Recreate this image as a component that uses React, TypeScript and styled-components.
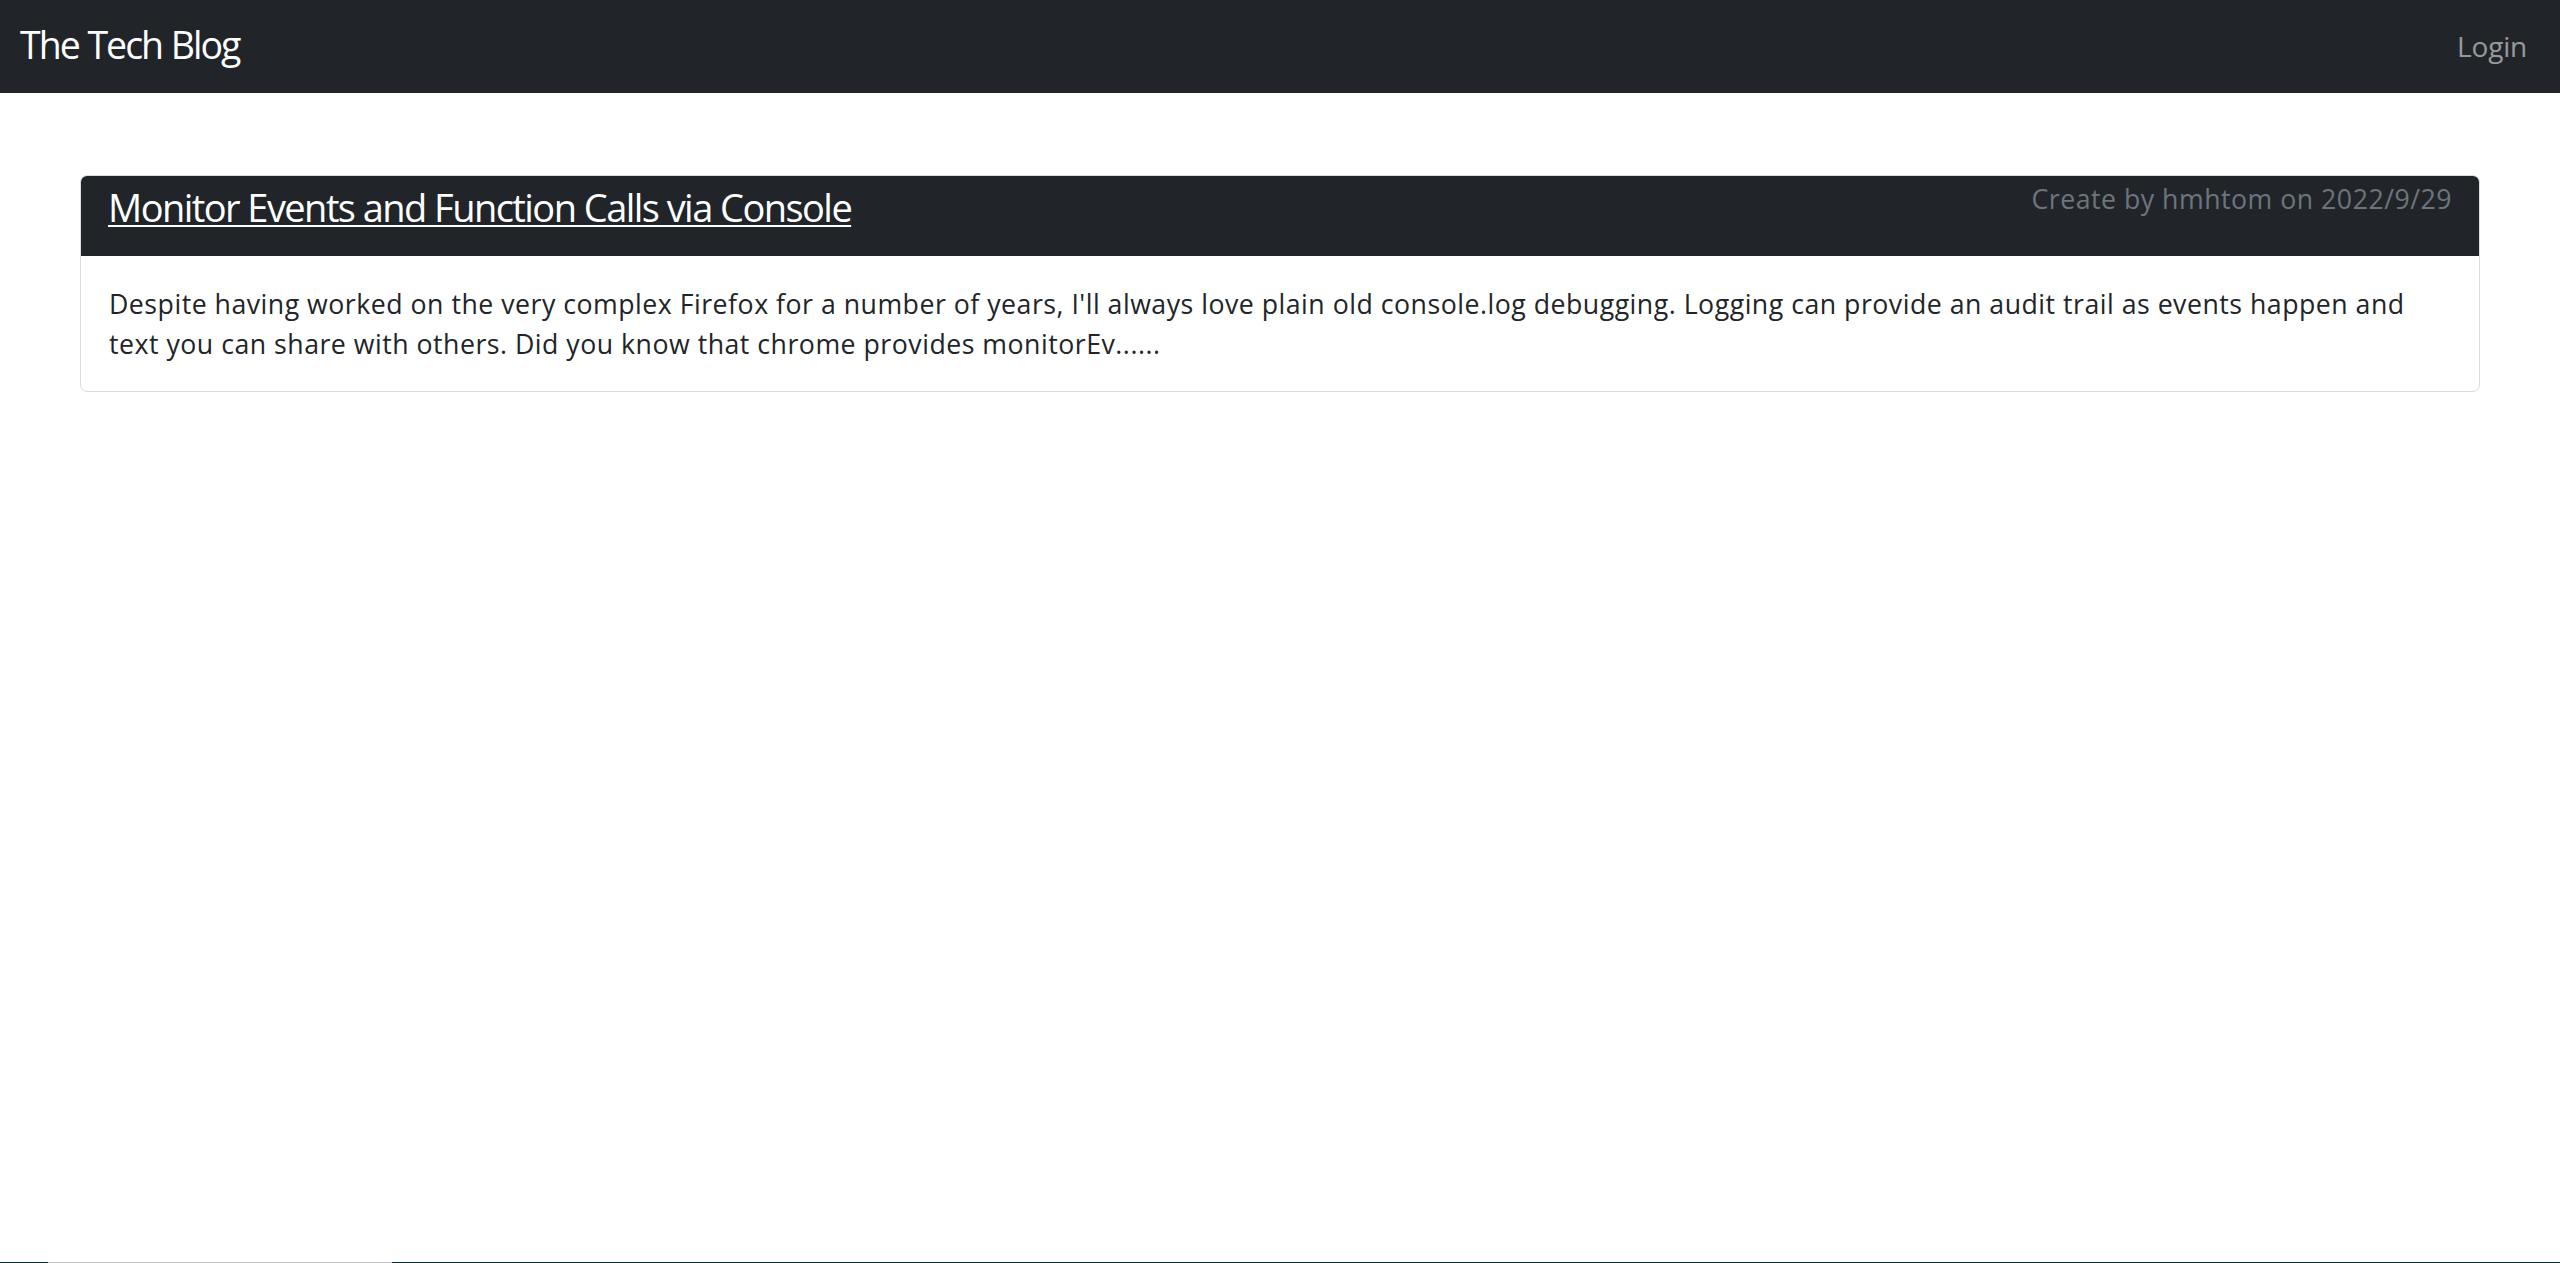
import React from "react";
import styled, { createGlobalStyle } from "styled-components";

const GlobalStyle = createGlobalStyle`
  html, body {
    margin: 0;
    padding: 0;
    background: #ffffff;
  }
  body {
    font-family: "Open Sans", "Noto Sans", "DejaVu Sans", sans-serif;
    color: #212529;
    -webkit-font-smoothing: antialiased;
  }
  * { box-sizing: border-box; }
`;

const Page = styled.div`
  min-height: 100vh;
  display: flex;
  flex-direction: column;
`;

const Navbar = styled.nav`
  height: 93px;
  background: #212529;
  display: flex;
  justify-content: space-between;
  align-items: flex-start;
  padding: 0 33px 0 20px;
`;

const Brand = styled.a`
  margin-top: 20px;
  font-size: 37.5px;
  line-height: 50px;
  color: #ffffff;
  text-decoration: none;
  letter-spacing: -2px;
  word-spacing: 1px;
`;

const NavLink = styled.a`
  margin-top: 26px;
  font-size: 28px;
  line-height: 40px;
  color: rgba(255, 255, 255, 0.55);
  text-decoration: none;
  letter-spacing: -0.2px;
`;

const Main = styled.main`
  flex: 1;
  padding: 82px 80px 0;
`;

const Card = styled.article`
  border: 1px solid #dcdcdc;
  border-radius: 7px;
  overflow: hidden;
  background: #ffffff;
`;

const CardHeader = styled.header`
  height: 80px;
  background: #212529;
  display: flex;
  justify-content: space-between;
  align-items: flex-start;
  padding: 0 27px 0 27px;
`;

const Title = styled.h4`
  margin: 8px 0 0;
  font-size: 38px;
  line-height: 46px;
  font-weight: 400;
  letter-spacing: -1.55px;
  a {
    color: #ffffff;
    text-decoration: underline;
    text-decoration-thickness: 2px;
    text-underline-offset: 3px;
  }
`;

const Meta = styled.span`
  margin-top: 5px;
  font-size: 26.7px;
  line-height: 36px;
  color: #6c757d;
  letter-spacing: 0.5px;
  white-space: nowrap;
`;

const CardBody = styled.div`
  padding: 28px 27px 27px 28px;
`;

const Excerpt = styled.p`
  margin: 0;
  font-size: 26.7px;
  line-height: 40px;
  color: #212529;
  letter-spacing: 0.5px;
`;

const BottomEdge = styled.div`
  height: 1px;
  background: linear-gradient(
    to right,
    #0d2a30 0,
    #0d2a30 48px,
    #c4c4c4 48px,
    #c4c4c4 392px,
    #0d2a30 392px
  );
`;

export default function App() {
  return (
    <Page>
      <GlobalStyle />
      <Navbar>
        <Brand href="#">The Tech Blog</Brand>
        <NavLink href="#">Login</NavLink>
      </Navbar>
      <Main>
        <Card>
          <CardHeader>
            <Title>
              <a href="#">Monitor Events and Function Calls via Console</a>
            </Title>
            <Meta>Create by hmhtom on 2022/9/29</Meta>
          </CardHeader>
          <CardBody>
            <Excerpt>
              Despite having worked on the very complex Firefox for a number of
              years, I'll always love plain old console.log debugging. Logging
              can provide an audit trail as events happen and text you can share
              with others. Did you know that chrome provides monitorEv......
            </Excerpt>
          </CardBody>
        </Card>
      </Main>
      <BottomEdge />
    </Page>
  );
}
